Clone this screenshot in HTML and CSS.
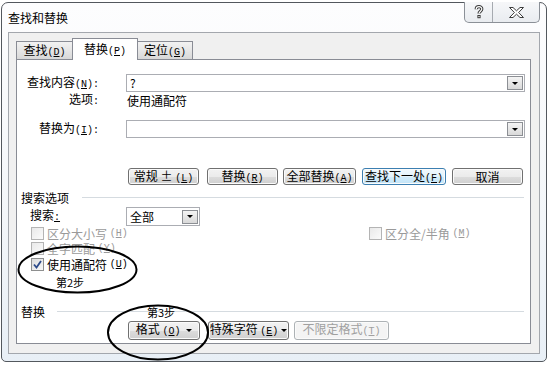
FILE: index.html
```html
<!DOCTYPE html>
<html lang="zh-CN">
<head>
    <meta charset="UTF-8">
    <title>查找和替换</title>
    <link rel="stylesheet" href="styles.css">
</head>
<body>
    <div class="screen">
        <div class="window">
            <div class="titlebar">
                <span class="title">查找和替换</span>
                <div class="caption-btns">
                    <span class="cap cap-help">
                        <svg width="10" height="14" viewBox="0 0 10 14">
                            <path d="M2.2 4.2 C2.2 0.8 7.8 0.8 7.8 4 C7.8 6.2 5 6.2 5 8.6" fill="none" stroke="#3b3b3b" stroke-width="3.2"/>
                            <rect x="3.4" y="10" width="3.2" height="3.2" fill="#3b3b3b"/>
                            <path d="M2.2 4.2 C2.2 0.8 7.8 0.8 7.8 4 C7.8 6.2 5 6.2 5 8.6" fill="none" stroke="#fff" stroke-width="1.2"/>
                            <rect x="4.4" y="11" width="1.2" height="1.2" fill="#fff"/>
                        </svg>
                    </span>
                    <span class="cap cap-close">
                        <svg width="15" height="11" viewBox="0 0 15 11">
                            <polygon points="0.5,0.5 4,0.5 7.5,3.8 11,0.5 14.5,0.5 9.6,5.5 14.5,10.5 11,10.5 7.5,7.2 4,10.5 0.5,10.5 5.4,5.5" fill="#fff" stroke="#3b3b3b" stroke-width="1"/>
                        </svg>
                    </span>
                </div>
            </div>

            <div class="client">
                <div class="tabs">
                    <span class="tab tab-first">查找<span class="acc">(<u>D</u>)</span></span>
                    <span class="tab active">替换<span class="acc">(<u>P</u>)</span></span>
                    <span class="tab tab-last">定位<span class="acc">(<u>G</u>)</span></span>
                </div>

                <div class="page">
                    <div class="field-row">
                        <label class="field-label">查找内容<span class="acc">(<u>N</u>):</span></label>
                        <div class="combo">
                            <span class="combo-text">?</span>
                            <span class="drop"><i class="arrow"></i></span>
                        </div>
                    </div>
                    <div class="field-row opts-row">
                        <span class="field-label">选项<span class="acc">:</span></span>
                        <span class="opts-value">使用通配符</span>
                    </div>
                    <div class="field-row replace-row">
                        <label class="field-label">替换为<span class="acc">(<u>I</u>):</span></label>
                        <div class="combo">
                            <span class="combo-text"></span>
                            <span class="drop"><i class="arrow"></i></span>
                        </div>
                    </div>

                    <div class="btn-row">
                        <button class="btn w71">常规 ± <span class="acc">(<u>L</u>)</span></button>
                        <button class="btn w71 gap8">替换<span class="acc">(<u>R</u>)</span></button>
                        <button class="btn w73 gap5">全部替换<span class="acc">(<u>A</u>)</span></button>
                        <button class="btn btn-default w84 gap6">查找下一处<span class="acc">(<u>F</u>)</span></button>
                        <button class="btn w71 gap6">取消</button>
                    </div>

                    <div class="group-title search-title">
                        <span>搜索选项</span>
                        <span class="group-line"></span>
                    </div>

                    <div class="search-row">
                        <label class="search-label">搜索<span class="acc"><u>:</u></span></label>
                        <div class="select">
                            <span class="combo-text">全部</span>
                            <span class="drop"><i class="arrow"></i></span>
                        </div>
                    </div>

                    <div class="check-grid">
                        <div class="check disabled"><span class="box"></span>区分大小写 <span class="acc">(<u>H</u>)</span></div>
                        <div class="check disabled"><span class="box"></span>区分全/半角 <span class="acc">(<u>M</u>)</span></div>
                        <div class="check disabled"><span class="box"></span>全字匹配 <span class="acc">(<u>Y</u>)</span></div>
                        <div></div>
                        <div class="check checked-row">
                            <span class="box checked">
                                <svg width="9" height="9" viewBox="0 0 9 9"><path d="M1 4.5 L3.5 7.5 L8 1" fill="none" stroke="#2c4a8a" stroke-width="1.8"/></svg>
                            </span>使用通配符 <span class="acc">(<u>U</u>)</span>
                        </div>
                    </div>

                    <div class="group-title replace-title">
                        <span>替换</span>
                        <span class="group-line"></span>
                    </div>

                    <div class="btn-row bottom-row">
                        <button class="btn tall w72">格式 <span class="acc">(<u>O</u>)</span> <i class="arrow"></i></button>
                        <button class="btn tall w81 gap8">特殊字符 <span class="acc">(<u>E</u>)</span><i class="arrow"></i></button>
                        <button class="btn tall w95 gap5 btn-disabled">不限定格式<span class="acc">(<u>T</u>)</span></button>
                    </div>
                </div>
            </div>
        </div>

        <svg class="annot" width="549" height="365" viewBox="0 0 549 365">
            <ellipse cx="77.5" cy="269.5" rx="59" ry="23" fill="none" stroke="#000" stroke-width="2"/>
            <ellipse cx="158" cy="332.5" rx="50" ry="27" fill="none" stroke="#000" stroke-width="2"/>
        </svg>
        <span class="note note-2">第2步</span>
        <span class="note note-3">第3步</span>
    </div>
</body>
</html>
```

FILE: styles.css
```css
body {
    margin: 0;
    background-color: #fff;
    font-family: "Noto Sans CJK SC", "Liberation Sans", sans-serif;
    font-size: 12px;
    color: #000;
}

.screen {
    position: relative;
    width: 549px;
    height: 365px;
    overflow: hidden;
}

.window {
    box-sizing: border-box;
    margin: 2px 0 0 1px;
    width: 546px;
    height: 360px;
    padding: 0 6px 7px 6px;
    border: 1px solid #53585e;
    border-radius: 7px 7px 5px 5px;
    background: linear-gradient(180deg, #fdfdfe 0%, #f3f6f9 60%, #e8eff6 100%);
}

.titlebar {
    height: 29px;
    display: flex;
    justify-content: space-between;
    align-items: center;
}

.title {
    line-height: 14px;
    margin-top: 1px;
}

.caption-btns {
    align-self: flex-start;
    margin-top: -1px;
    display: flex;
    height: 20px;
    border: 1px solid #8b9097;
    border-top: none;
    border-radius: 0 0 5px 5px;
    background: linear-gradient(180deg, #f6f7f9, #e9ecf0);
}

.cap {
    display: flex;
    align-items: center;
    justify-content: center;
}

.cap-help {
    width: 27px;
    border-right: 1px solid #a6aab0;
}

.cap-close {
    width: 46px;
}

/* 半角字符按宋体的 6px 宽来排 */
.acc {
    font-family: "Liberation Mono", monospace;
    font-size: 10px;
}

.client {
    box-sizing: border-box;
    height: 322px;
    padding: 0 8px 9px 7px;
    border: 1px solid #a3a7ad;
    background-color: #f0f0f0;
}

.tabs {
    display: flex;
    align-items: flex-end;
    height: 20px;
    padding-top: 6px;
}

.tab {
    box-sizing: border-box;
    height: 18px;
    line-height: 16px;
    border: 1px solid #898c95;
    border-bottom: none;
    background: linear-gradient(180deg, #f2f2f2 0%, #e6e6e6 50%, #d8d8d8 100%);
    text-align: center;
}

.tab-first {
    width: 57px;
}

.tab.active {
    position: relative;
    z-index: 1;
    width: 66px;
    height: 22px;
    line-height: 19px;
    margin-left: -1px;
    margin-bottom: -1px;
    background: #fff;
}

.tab-last {
    width: 56px;
    margin-left: -1px;
}

.page {
    box-sizing: border-box;
    height: 285px;
    padding-top: 14px;
    border: 1px solid #898c95;
    background-color: #fff;
}

.field-row {
    display: grid;
    grid-template-columns: 109px 399px;
    align-items: center;
    height: 18px;
}

.field-label {
    text-align: right;
    padding-right: 27px;
    line-height: 14px;
}

.opts-row {
    height: 14px;
}

.opts-value {
    padding-left: 1px;
    line-height: 14px;
}

.replace-row {
    margin-top: 14px;
}

.combo,
.select {
    box-sizing: border-box;
    display: flex;
    align-items: center;
    justify-content: space-between;
    height: 18px;
    padding: 1px 1px 1px 3px;
    border: 1px solid #abadb3;
    background: #fff;
}

.combo-text {
    line-height: 14px;
}

.drop {
    box-sizing: border-box;
    display: flex;
    align-items: center;
    justify-content: center;
    width: 16px;
    height: 14px;
    border: 1px solid #8c8f94;
    background: linear-gradient(180deg, #f4f4f4, #d9d9d9);
}

.arrow {
    display: inline-block;
    width: 0;
    height: 0;
    border-left: 3px solid transparent;
    border-right: 3px solid transparent;
    border-top: 3px solid #000;
}

.btn-row {
    display: flex;
    margin-top: 30px;
    padding-left: 111px;
}

.btn {
    box-sizing: border-box;
    height: 17px;
    padding: 0;
    border: 1px solid #707070;
    border-radius: 3px;
    background: linear-gradient(180deg, #f2f2f2 0%, #ebebeb 50%, #dddddd 51%, #cfcfcf 100%);
    box-shadow: inset 0 0 0 1px #fbfbfb;
    font-family: "Noto Sans CJK SC", "Liberation Sans", sans-serif;
    font-size: 12px;
    line-height: 14px;
    color: #000;
    white-space: nowrap;
}

.btn .arrow {
    margin-left: 3px;
    vertical-align: 2px;
}

.btn-default {
    border-color: #3c7fb1;
    background: linear-gradient(180deg, #f1f9fe 0%, #e3f3fc 50%, #d2ecfb 51%, #c3e4f7 100%);
}

.btn-disabled {
    border-color: #adb2b5;
    background: #f4f4f4;
    color: #a0a0a0;
}

.tall {
    height: 19px;
}

.w71 { width: 71px; }
.w72 { width: 72px; }
.w73 { width: 73px; }
.w81 { width: 81px; }
.w84 { width: 84px; }
.w95 { width: 95px; }
.gap5 { margin-left: 5px; }
.gap6 { margin-left: 6px; }
.gap8 { margin-left: 8px; }

.group-title {
    display: flex;
    align-items: center;
    height: 14px;
    padding-left: 4px;
    padding-right: 6px;
    line-height: 14px;
}

.group-line {
    flex: 1;
    height: 1px;
    margin-top: -1px;
    background-color: #d5dbe0;
}

.search-title {
    margin-top: 6px;
}

.search-title .group-line {
    margin-left: 13px;
}

.replace-title {
    margin-top: 34px;
}

.replace-title .group-line {
    margin-left: 12px;
}

.search-row {
    display: grid;
    grid-template-columns: 109px 74px;
    align-items: center;
    height: 19px;
    margin-top: 2px;
}

.search-label {
    padding-left: 13px;
    line-height: 14px;
}

.select {
    height: 19px;
}

.check-grid {
    display: grid;
    grid-template-columns: 338px 1fr;
    grid-auto-rows: 15px;
    padding-left: 14px;
}

.check {
    display: flex;
    align-items: center;
    line-height: 14px;
    white-space: pre;
}

.check.disabled {
    color: #9a9a9a;
}

.checked-row {
    margin-top: 2px;
}

.box {
    box-sizing: border-box;
    display: flex;
    align-items: center;
    justify-content: center;
    width: 13px;
    height: 13px;
    margin-right: 3px;
    border: 1px solid #b4b4b4;
    background: linear-gradient(135deg, #e9e9e9, #fbfbfb);
}

.box.checked {
    border-color: #8e8f8f;
    background: linear-gradient(135deg, #dcdcdc, #f8f8f8);
}

.bottom-row {
    margin-top: 2px;
}

.annot {
    position: absolute;
    left: 0;
    top: 0;
    pointer-events: none;
}

.note {
    position: absolute;
    font-size: 11px;
    line-height: 12px;
}

.note-2 {
    left: 56px;
    top: 276px;
}

.note-3 {
    left: 147px;
    top: 306px;
}
```
